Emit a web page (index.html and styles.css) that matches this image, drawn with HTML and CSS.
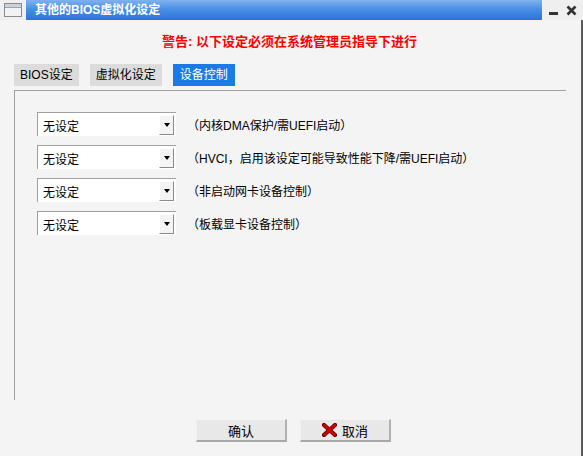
FILE: index.html
```html
<!DOCTYPE html>
<html lang="zh">
<head>
<meta charset="utf-8">
<title>其他的BIOS虚拟化设定</title>
<link rel="stylesheet" href="styles.css">
</head>
<body>
<div class="window">
  <div class="titlebar">
    <div class="tb-icon">
      <svg width="18" height="14" viewBox="0 0 18 14">
        <rect x="0.5" y="0.5" width="17" height="13" fill="#f2f2f2" stroke="#8a8a8a"/>
        <rect x="1" y="1" width="16" height="3" fill="#c9d3de"/>
        <line x1="1" y1="4.5" x2="17" y2="4.5" stroke="#9aa4ae"/>
      </svg>
    </div>
    <div class="tb-title">其他的BIOS虚拟化设定</div>
    <div class="tb-controls">
      <svg width="9" height="4" viewBox="0 0 9 4"><rect x="0" y="0" width="9" height="3" fill="#333"/></svg>
      <svg width="11" height="11" viewBox="0 0 11 11"><path d="M1.5 1.5 L9.5 9.5 M9.5 1.5 L1.5 9.5" stroke="#333" stroke-width="2.6"/></svg>
    </div>
  </div>
  <div class="content">
    <div class="warning">警告: 以下设定必须在系统管理员指导下进行</div>
    <div class="tabs">
      <div class="tab">BIOS设定</div>
      <div class="tab">虚拟化设定</div>
      <div class="tab active">设备控制</div>
    </div>
    <div class="panel">
      <div class="row">
        <div class="select"><span class="sel-text">无设定</span><span class="sel-btn"><i class="arrow"></i></span></div>
        <span class="label">（内核DMA保护/需UEFI启动）</span>
      </div>
      <div class="row">
        <div class="select"><span class="sel-text">无设定</span><span class="sel-btn"><i class="arrow"></i></span></div>
        <span class="label">（HVCI，启用该设定可能导致性能下降/需UEFI启动）</span>
      </div>
      <div class="row">
        <div class="select"><span class="sel-text">无设定</span><span class="sel-btn"><i class="arrow"></i></span></div>
        <span class="label">（非启动网卡设备控制）</span>
      </div>
      <div class="row">
        <div class="select"><span class="sel-text">无设定</span><span class="sel-btn"><i class="arrow"></i></span></div>
        <span class="label">（板载显卡设备控制）</span>
      </div>
    </div>
    <div class="buttons">
      <div class="btn">确认</div>
      <div class="btn">
        <svg class="x-icon" width="15" height="14" viewBox="0 0 15 14">
          <path d="M2 2 L13 12 M13 2 L2 12" stroke="#5a0000" stroke-width="4.2" stroke-linecap="round"/>
          <path d="M2 2 L13 12 M13 2 L2 12" stroke="#d40000" stroke-width="2.4" stroke-linecap="round"/>
        </svg>
        <span>取消</span>
      </div>
    </div>
  </div>
</div>
</body>
</html>
```
FILE: styles.css
```css
html, body {
  margin: 0;
  padding: 0;
}
body {
  width: 583px;
  height: 456px;
  overflow: hidden;
  background: #f4f4f4;
  font-family: "Liberation Sans", "Noto Sans CJK SC", sans-serif;
  font-size: 12px;
  color: #000;
}
.window {
  display: flex;
  flex-direction: column;
  height: 456px;
}
.titlebar {
  display: flex;
  height: 20px;
}
.tb-icon {
  width: 26px;
  background: #efefef;
  display: flex;
  align-items: center;
  padding-left: 4px;
  box-sizing: border-box;
}
.tb-title {
  flex: 1;
  background: linear-gradient(#7fb2ee, #4a8fe6 45%, #2a74d8);
  color: #fff;
  font-weight: bold;
  font-size: 12px;
  line-height: 20px;
  padding-left: 9px;
}
.tb-controls {
  width: 41px;
  background: #efefef;
  display: flex;
  align-items: center;
  gap: 8px;
  padding-left: 7px;
  box-sizing: border-box;
}
.tb-controls svg:first-child {
  margin-top: 8px;
}
.content {
  flex: 1;
  display: flex;
  flex-direction: column;
  border-right: 2px solid #5a5a5a;
}
.warning {
  height: 44px;
  box-sizing: border-box;
  padding-top: 13px;
  text-align: center;
  color: #ff0000;
  font-weight: bold;
  font-size: 13px;
  line-height: 18px;
  padding-right: 2px;
}
.tabs {
  display: flex;
  gap: 11px;
  padding-left: 14px;
  height: 22px;
}
.tab {
  background: #dcdcdc;
  padding: 1px 6px 0;
  line-height: 21px;
}
.tab.active {
  background: #1a7ae6;
  color: #fff;
  padding: 1px 7px 0;
}
.panel {
  margin-top: 4px;
  margin-left: 14px;
  width: 552px;
  height: 310px;
  box-sizing: border-box;
  border-top: 1px solid #a0a0a0;
  border-left: 1px solid #a0a0a0;
  padding: 21px 0 0 22px;
  display: flex;
  flex-direction: column;
  gap: 9px;
}
.row {
  display: flex;
  align-items: center;
  gap: 11px;
  height: 24px;
}
.select {
  width: 139px;
  height: 24px;
  box-sizing: border-box;
  background: #fff;
  border-top: 1px solid #a0a0a0;
  border-left: 1px solid #a0a0a0;
  display: flex;
  align-items: center;
}
.sel-text {
  flex: 1;
  padding-left: 5px;
  padding-top: 1px;
}
.sel-btn {
  width: 15px;
  height: 20px;
  box-sizing: border-box;
  margin-right: 2px;
  background: #f4f4f4;
  border-top: 1px solid #fff;
  border-left: 1px solid #fff;
  border-right: 1px solid #8a8a8a;
  border-bottom: 1px solid #8a8a8a;
  display: flex;
  align-items: center;
  justify-content: center;
}
.arrow {
  width: 0;
  height: 0;
  border-left: 3.5px solid transparent;
  border-right: 3.5px solid transparent;
  border-top: 4px solid #000;
}
.label {
  padding-top: 1px;
}
.buttons {
  display: flex;
  justify-content: center;
  gap: 13px;
  margin-top: 19px;
  padding-left: 6px;
}
.btn {
  width: 91px;
  height: 23px;
  box-sizing: border-box;
  background: #e8e8e8;
  border-top: 1px solid #f2f2f2;
  border-left: 1px solid #f0f0f0;
  border-right: 2px solid #b0b0b0;
  border-bottom: 2px solid #a8a8a8;
  display: flex;
  align-items: center;
  justify-content: center;
  gap: 5px;
  font-size: 13px;
}
.x-icon {
  display: block;
}
```
